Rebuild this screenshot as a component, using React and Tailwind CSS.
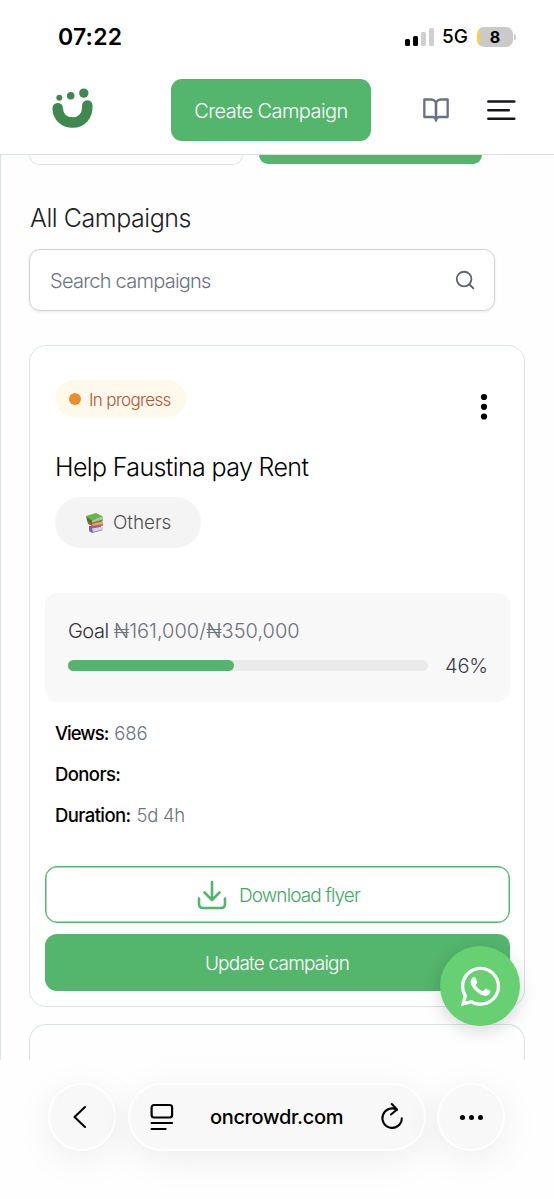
import { FaWhatsapp } from "react-icons/fa";
import { FiBookOpen, FiSearch } from "react-icons/fi";

const stats = [
  { label: "Views:", value: "686", labelClass: "tracking-[-1px]", valueClass: "tracking-[-0.1px]" },
  { label: "Donors:", value: "", labelClass: "tracking-[-0.6px]", valueClass: "" },
  { label: "Duration:", value: "5d 4h", labelClass: "tracking-[-0.6px]", valueClass: "tracking-[-0.3px]" },
];

function Logo() {
  return (
    <svg width="44" height="44" viewBox="0 0 44 44" fill="#3f8850">
      <circle cx="9.3" cy="11.7" r="3" />
      <circle cx="20.7" cy="9.7" r="3.8" />
      <circle cx="33.8" cy="7.1" r="4.7" />
      <path d="M7.7 22.7C8 31.500 14 37 22.700 37C31.500 37 37.800 30.500 37.300 20" transform="translate(0 -.5)" fill="none" stroke="#3f8850" strokeWidth="10.500" strokeLinecap="round" />
    </svg>
  );
}

function BooksIcon() {
  return (
    <svg width="20" height="21" viewBox="0 0 20 21">
      <path d="M4 14l11-1 3 5-11 3-3-2z" fill="#7467b5" />
      <path d="M7 16.500l11-2v3l-10 2.500z" fill="#d5d2e6" />
      <path d="M2 8l13-1 3 4-11 3-4-2z" fill="#c64f35" />
      <path d="M7 11.500l11-2v3.500l-10 2z" fill="#dfa591" />
      <path d="M6 14l12-2v1.500l-11 2z" fill="#d45b36" />
      <path d="M1 4l10-3 7 3.500-11 4z" fill="#68b545" />
      <path d="M1 4l6 4.500v3l-5-3z" fill="#407c30" />
      <path d="M7 8.500l11-4v3l-11 3.500z" fill="#a9c79b" />
      <path d="M7 11l11-3.500v1l-11 3.500z" fill="#4b9235" />
    </svg>
  );
}

function StatusBar() {
  return (
    <div className="flex h-[74px] items-center justify-between pl-[58px] pr-[38px]">
      <span className="text-[23px] font-semibold tracking-[0.2px] text-black">07:22</span>
      <div className="flex items-center">
        <div className="flex h-[18px] items-end gap-[3px]">
          <span className="h-[7px] w-[5px] rounded-[1.500px] bg-black"></span>
          <span className="h-[10px] w-[5px] rounded-[1.500px] bg-black"></span>
          <span className="h-[14px] w-[5px] rounded-[1.500px] bg-[#cfcfcf]"></span>
          <span className="h-[18px] w-[5px] rounded-[1.500px] bg-[#cfcfcf]"></span>
        </div>
        <span className="ml-[8px] w-[27px] pt-px text-[19px] font-medium tracking-[-0.1px] text-black">5G</span>
        <div className="ml-[8px] flex h-[20px] w-[36px] items-center justify-center overflow-hidden rounded-[7px] bg-[linear-gradient(to_right,#f8cf46_3px,#cacaca_3px)] text-[16px] font-bold text-black">
          8
        </div>
        <span className="ml-px h-[6px] w-[2px] rounded-r-full bg-[#cacaca]"></span>
      </div>
    </div>
  );
}

function Navbar() {
  return (
    <nav className="flex h-[80px] items-start pl-[50px] pt-[5px]">
      <div className="mt-[7px]">
        <Logo />
      </div>
      <button className="ml-[77px] h-[62px] w-[200px] rounded-[11px] bg-[#54b56c] pt-px text-[20px] font-light text-white">
        <span className="tracking-[-0.55px]">Create Campaign</span>
      </button>
      <FiBookOpen className="ml-[51px] mt-[17px] text-[#6b7183]" size={28} />
      <svg className="ml-[36px] mt-[19px]" width="30" height="24" viewBox="0 0 30 24" stroke="#15161c" strokeWidth="2.500" strokeLinecap="round">
        <path d="M2.300 3.500h26M2.300 12.200h20.500M2.300 20.700h26" />
      </svg>
    </nav>
  );
}

function CampaignCard() {
  return (
    <div className="h-[662px] w-[496px] rounded-[17px] border border-[#dbe3e4] bg-white pl-[15px] pr-[14px] pt-[34px]">
      <div className="flex justify-between pl-[10px] pr-[22px]">
        <div className="flex h-[37px] w-[131px] items-center rounded-full bg-[#fef9ea] pl-[14px]">
          <span className="h-[12px] w-[12px] rounded-full bg-[#e88f2c]"></span>
          <span className="ml-[8px] whitespace-nowrap pt-1 text-[17px] font-[350] tracking-[-0.65px] text-[#ae5637]">In progress</span>
        </div>
        <svg className="mt-[13px]" width="8" height="28" viewBox="0 0 8 28" fill="#000">
          <circle cx="4" cy="4" r="3.100" />
          <circle cx="4" cy="13.800" r="3.100" />
          <circle cx="4" cy="23.500" r="3.100" />
        </svg>
      </div>

      <h3 className="mt-[28px] h-[36px] pl-[10px] text-[25px] font-[350] leading-[36px] tracking-[-0.62px] text-black">Help Faustina pay Rent</h3>
      <div className="ml-[10px] mt-[12px] flex h-[51px] w-[146px] items-center rounded-full bg-[#f4f4f4] pl-[30px]">
        <BooksIcon />
        <span className="ml-[8px] pt-0.5 text-[19px] font-light tracking-[-0.1px] text-[#505050]">Others</span>
      </div>

      <div className="mt-[45px] h-[109px] rounded-[12px] bg-[#f8f8f9] pl-[23px] pr-[22px] pt-[24px]">
        <p className="h-[28px] whitespace-nowrap text-[20px] font-light leading-[28px] text-[#2e3138]">
          <span className="tracking-[-0.5px]">Goal </span>
          <span className="text-[#6d727d]">₦161,000/₦350,000</span>
        </p>
        <div className="mt-[6px] flex h-[28px] items-center">
          <div className="h-[11px] w-[360px] shrink-0 rounded-full bg-[#eaeaea]">
            <div className="h-full rounded-full bg-[#54b56c]" style={{ width: "46%" }}></div>
          </div>
          <span className="ml-[17px] pt-px text-[20px] font-light tracking-[-0.2px] text-[#393e4a]">46%</span>
        </div>
      </div>

      <div className="mt-[11px] pl-[10px] text-[18.500px]">
        {stats.map((s) => (
          <p key={s.label} className="flex h-[41px] items-center gap-[6px]">
            <span className={`font-medium text-black ${s.labelClass}`}>{s.label}</span>
            <span className={`font-light text-[#6c7180] ${s.valueClass}`}>{s.value}</span>
          </p>
        ))}
      </div>

      <button className="mt-[30px] flex h-[57px] w-full items-center rounded-[12px] border border-[#54b56c] pl-[151px] text-[19px] font-light text-[#45a765] shadow-[inset_0_0_0_0.5px_#54b56c]">
        <svg width="30" height="30" viewBox="0 0 30 30" fill="none" stroke="#54b56c" strokeWidth="2.600" strokeLinecap="round" strokeLinejoin="round">
          <path d="M15 2v18M7.500 12.500L15 20l7.500-7.500M2 18.500v5.500q0 4 4 4h18q4 0 4-4v-5.500" />
        </svg>
        <span className="ml-[12px] pt-[3px] tracking-[-0.9px]">Download flyer</span>
      </button>
      <button className="mt-[11px] h-[57px] w-full rounded-[12px] bg-[#54b56c] pr-px pt-1 text-[19px] font-light text-white">
        <span className="tracking-[-0.8px]">Update campaign</span>
      </button>
    </div>
  );
}

function BrowserBar() {
  return (
    <footer className="flex h-[139px] items-start gap-[12px] bg-[#fefefe] pl-[48px] pt-[23px] text-black">
      <button className="flex h-[68px] w-[68px] items-center justify-center rounded-full border-2 border-white bg-[#f8f8f8] shadow-[0_8px_38px_rgba(0,0,0,0.07)]">
        <svg className="mr-1" width="16" height="24" viewBox="0 0 16 24" fill="none" stroke="currentColor" strokeWidth="2.100" strokeLinecap="round" strokeLinejoin="round">
          <path d="M13 2L2.500 12l10.500 10" />
        </svg>
      </button>
      <div className="flex h-[68px] w-[298px] items-center rounded-full border-2 border-white bg-[#f8f8f8] pl-[20px] shadow-[0_8px_38px_rgba(0,0,0,0.07)]">
        <svg width="24" height="28" viewBox="0 0 24 28" fill="none" stroke="currentColor" strokeWidth="2.200" strokeLinecap="round">
          <rect x="1.600" y="2" width="20.500" height="12.500" rx="2.500" />
          <path d="M1.600 20h20.500M1.600 26h14" />
        </svg>
        <span className="ml-[36px] w-[134px] whitespace-nowrap text-[20px] font-medium tracking-[-0.35px]">oncrowdr.com</span>
        <svg className="ml-[35px] mb-[2px]" width="26" height="28" viewBox="0 0 26 28" fill="none" stroke="currentColor" strokeWidth="2.100" strokeLinecap="round" strokeLinejoin="round">
          <path d="M22.800 16.200A9.700 9.700 0 1 1 18 7.800M12.800 2l5.200 5.500-6 5" />
        </svg>
      </div>
      <button className="-ml-px flex h-[68px] w-[68px] items-center justify-center gap-[4px] rounded-full border-2 border-white bg-[#f8f8f8] shadow-[0_8px_38px_rgba(0,0,0,0.07)]">
        <span className="h-[5px] w-[5px] rounded-full bg-black"></span>
        <span className="h-[5px] w-[5px] rounded-full bg-black"></span>
        <span className="h-[5px] w-[5px] rounded-full bg-black"></span>
      </button>
    </footer>
  );
}

function App() {
  return (
    <div className="relative h-[1199px] w-[554px] overflow-hidden bg-white font-['Inter',sans-serif]">
      <header className="h-[155px] border-b border-[#dce1e1] bg-white">
        <StatusBar />
        <Navbar />
      </header>

      <main className="h-[905px] overflow-hidden border-l border-[#d9e2e3] bg-[#fefefe] pl-[28px]">
        <div className="flex gap-[16px]">
          <div className="h-[10px] w-[214px] rounded-b-[12px] border border-t-0 border-[#e1e5e9]"></div>
          <div className="h-[9px] w-[223px] rounded-b-[12px] bg-[#54b56c]"></div>
        </div>
        <h2 className="mt-[35px] h-[36px] pl-px text-[25px] font-light leading-[36px] tracking-[-0.45px] text-[#202124]">All Campaigns</h2>
        <div className="mt-[13px] flex h-[62px] w-[466px] items-center justify-between rounded-[11px] border border-[#d0d3d9] bg-white pl-[20px] pr-[18px] shadow-[0_1px_3px_rgba(0,0,0,0.08)]">
          <span className="pt-px text-[20px] font-light tracking-[-0.75px] text-[#6d7280]">Search campaigns</span>
          <FiSearch size={22} className="text-[#5f6478]" />
        </div>

        <div className="mt-[34px] flex flex-col gap-[17px]">
          <CampaignCard />
          <div className="h-[60px] w-[496px] rounded-t-[17px] border border-b-0 border-[#dbe3e4] bg-linear-to-b from-white to-[#fcfcfc]"></div>
        </div>
      </main>

      <BrowserBar />

      <button className="absolute left-[440px] top-[946px] flex h-[80px] w-[80px] items-center justify-center rounded-full bg-[#67d073] text-white shadow-[0_5px_18px_rgba(0,0,0,0.16)]">
        <FaWhatsapp size={45} />
      </button>
    </div>
  );
}

export default App;
